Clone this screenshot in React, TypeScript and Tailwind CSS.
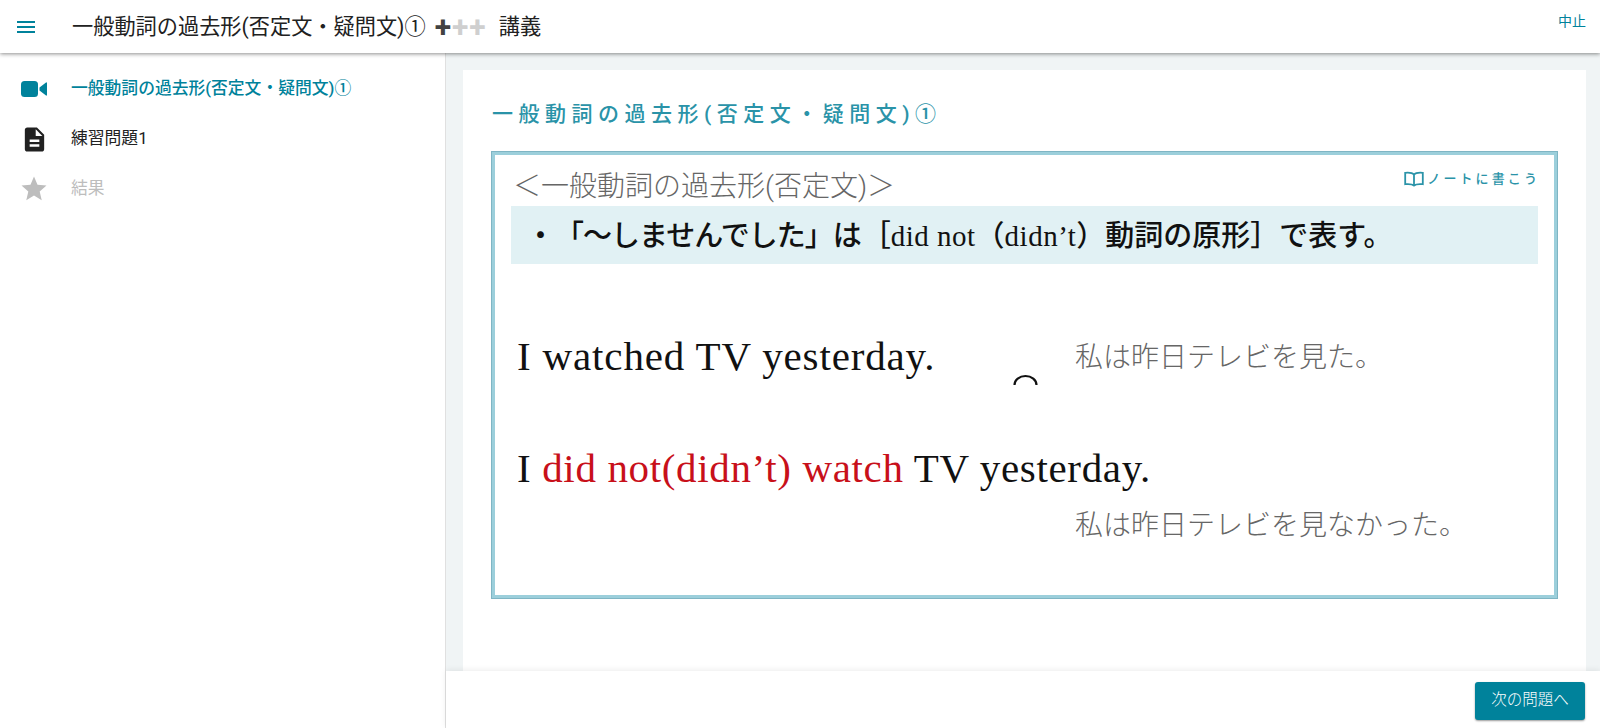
const sans = "font-['Roboto','Noto_Sans_CJK_JP',sans-serif]";

function MenuIcon() {
  return (
    <svg width="24" height="24" viewBox="0 0 24 24" fill="#00829b">
      <path d="M3 18h18v-2H3v2zm0-5h18v-2H3v2zm0-7v2h18V6H3z" />
    </svg>
  );
}

function VideoIcon() {
  return (
    <svg width="28" height="18" viewBox="0 0 28 18" fill="#00829b">
      <rect x="1" y="1" width="17" height="16" rx="3.500" />
      <path d="M19.500 7.500 26 2.500a.6.6 0 0 1 1 .5v12a.6.6 0 0 1-1 .5l-6.500-5z" />
    </svg>
  );
}

function DocIcon() {
  return (
    <svg width="29" height="29" viewBox="0 0 24 24" fill="#212121">
      <path d="M14 2H6c-1.100 0-2 .9-2 2v16c0 1.100.9 2 2 2h12c1.100 0 2-.9 2-2V8l-6-6zm2 16H8v-2h8v2zm0-4H8v-2h8v2zm-3-5V3.500L18.500 9H13z" />
    </svg>
  );
}

function StarIcon() {
  return (
    <svg width="30" height="30" viewBox="0 0 24 24" fill="#bdbdbd">
      <path d="M12 17.270 18.180 21l-1.640-7.030L22 9.240l-7.190-.610L12 2 9.190 8.630 2 9.240l5.460 4.730L5.820 21z" />
    </svg>
  );
}

function BookIcon() {
  return (
    <svg width="20" height="16" viewBox="0 0 20 16" fill="none" stroke="#2a93a8" strokeWidth="1.800">
      <path d="M10 3.500C8.500 1.800 5 1.500 1.200 1.800v11.400c3.800-.3 7.300 0 8.800 1.300 1.500-1.300 5-1.600 8.800-1.300V1.800C15 1.500 11.500 1.800 10 3.500zM10 3.500v11" />
    </svg>
  );
}

const sideItems = [
  { label: "一般動詞の過去形(否定文・疑問文)①", icon: <VideoIcon />, text: "text-[#00829b] font-medium" },
  { label: "練習問題1", icon: <DocIcon />, text: "text-[#212121]" },
  { label: "結果", icon: <StarIcon />, text: "text-[#bdbdbd]" },
];

export default function App() {
  return (
    <div className={`${sans} flex h-[728px] w-[1600px] flex-col overflow-hidden bg-white`}>
      <header className="relative z-10 flex h-[53px] shrink-0 items-center bg-white pl-[14px] pr-[14px] shadow-[0_1px_4px_rgba(0,0,0,0.45)]">
        <MenuIcon />
        <h1 className="ml-[34px] text-[21.200px] text-[#212121]">一般動詞の過去形(否定文・疑問文)①</h1>
        <div className="ml-[9px] flex items-center text-[30px] font-bold leading-none tracking-[1px]">
          <span className="text-[#424242]">+</span>
          <span className="text-[#cfcfcf]">++</span>
        </div>
        <span className="ml-[12px] text-[21.200px] text-[#212121]">講義</span>
        <button className="ml-auto mb-[10px] text-[14px] text-[#00829b]">中止</button>
      </header>

      <div className="flex min-h-0 flex-1">
        <aside className="w-[446px] shrink-0 border-r border-[#e0e0e0] bg-white pt-[11px]">
          {sideItems.map((item) => (
            <div key={item.label} className="flex h-[50px] items-center pl-[17px]">
              <span className="flex w-[34px] justify-center">{item.icon}</span>
              <span className={`ml-[20px] text-[16.800px] ${item.text}`}>{item.label}</span>
            </div>
          ))}
        </aside>

        <div className="flex min-w-0 flex-1 flex-col">
          <main className="min-h-0 flex-1 bg-[#f0f4f5] pl-[17px] pr-[14px] pt-[17px]">
            <section className="h-full bg-white pl-[29px] pr-[29px] pt-[32px]">
              <h2 className="text-[21px] font-medium leading-[24px] tracking-[5.500px] text-[#2a93a8]">
                一般動詞の過去形(否定文・疑問文)①
              </h2>

              <div className="relative mt-[26px] h-[446px] border-[3px] border-[#9ccfdb] bg-white px-[16px] pt-[13px] shadow-[0_0_0_1px_#7fb5c4]">
                <button className="absolute right-[14px] top-[15px] flex items-center gap-[3px] text-[13px] font-medium leading-[18px] tracking-[3.100px] text-[#2a93a8]">
                  <BookIcon />
                  ノートに書こう
                </button>

                <p className="pl-[2px] text-[28px] font-light leading-[38px] text-[#666666]">＜一般動詞の過去形(否定文)＞</p>
                <p className="flex h-[58px] items-center bg-[#e1f1f4] pl-[18px] pt-[3px] font-['Liberation_Serif','Noto_Sans_CJK_JP',serif] text-[29px] font-medium text-[#111111]">
                  <span className="-ml-[3px]">・</span>
                  <span className="tracking-[-1px]">「～しませんでした」</span>
                  は［<span className="tracking-[0.500px]">did not</span>（<span className="tracking-[0.500px]">didn’t</span>）動詞の原形］で表す。
                </p>

                <div className="mt-[67px] flex items-center pl-[6px]">
                  <p className="w-[558px] shrink-0 font-['Liberation_Serif',serif] text-[41px] leading-[50px] tracking-[0.850px] text-[#111111]">
                    I watched TV yesterday.
                  </p>
                  <p className="pt-[4px] text-[28px] font-light leading-[36px] text-[#666666]">私は昨日テレビを見た。</p>
                </div>

                <p className="mt-[62px] pl-[6px] font-['Liberation_Serif',serif] text-[41px] leading-[50px] tracking-[0.650px] text-[#111111]">
                  I <span className="text-[#c8101a]">did not(didn’t) watch</span> TV yesterday.
                </p>
                <p className="mt-[15px] pl-[564px] text-[28px] font-light leading-[36px] text-[#666666]">私は昨日テレビを見なかった。</p>

                <svg className="absolute left-[517px] top-[218px]" width="27" height="13" viewBox="0 0 27 13" fill="none" stroke="#111111" strokeWidth="2.200">
                  <path d="M2.500 12a11 9 0 0 1 22 0" />
                </svg>
              </div>
            </section>
          </main>

          <footer className="flex h-[57px] shrink-0 items-start justify-end bg-white pr-[15px] pt-[11px] shadow-[0_-1px_6px_rgba(0,0,0,0.08)]">
            <button className="h-[38px] w-[110px] rounded-[3px] bg-[#00829b] text-[15.500px] font-light text-white shadow-[0_1px_2px_rgba(0,0,0,0.4)]">
              次の問題へ
            </button>
          </footer>
        </div>
      </div>
    </div>
  );
}
